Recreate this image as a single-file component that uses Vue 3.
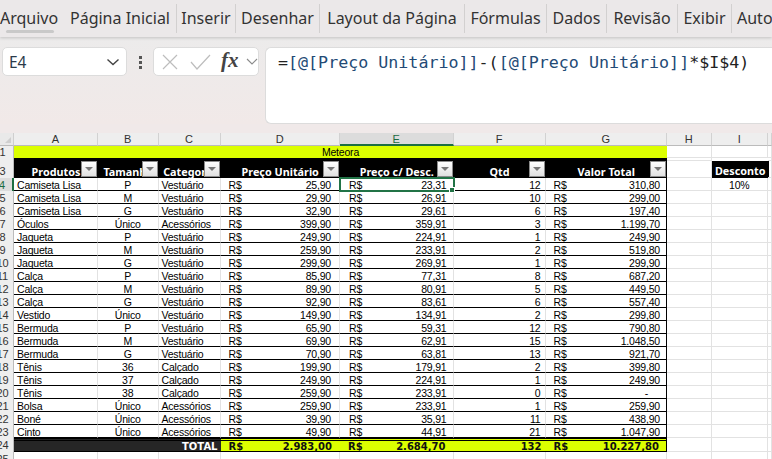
<script setup>
const cols = ['A','B','C','D','E','F','G','H','I','']
const rows = [
 ['Camiseta Lisa','P','Vestuário','25,90','23,31','12','310,80'],
 ['Camiseta Lisa','M','Vestuário','29,90','26,91','10','299,00'],
 ['Camiseta Lisa','G','Vestuário','32,90','29,61','6','197,40'],
 ['Óculos','Único','Acessórios','399,90','359,91','3','1.199,70'],
 ['Jaqueta','P','Vestuário','249,90','224,91','1','249,90'],
 ['Jaqueta','M','Vestuário','259,90','233,91','2','519,80'],
 ['Jaqueta','G','Vestuário','299,90','269,91','1','299,90'],
 ['Calça','P','Vestuário','85,90','77,31','8','687,20'],
 ['Calça','M','Vestuário','89,90','80,91','5','449,50'],
 ['Calça','G','Vestuário','92,90','83,61','6','557,40'],
 ['Vestido','Único','Vestuário','149,90','134,91','2','299,80'],
 ['Bermuda','P','Vestuário','65,90','59,31','12','790,80'],
 ['Bermuda','M','Vestuário','69,90','62,91','15','1.048,50'],
 ['Bermuda','G','Vestuário','70,90','63,81','13','921,70'],
 ['Tênis','36','Calçado','199,90','179,91','2','399,80'],
 ['Tênis','37','Calçado','249,90','224,91','1','249,90'],
 ['Tênis','38','Calçado','259,90','233,91','0','-'],
 ['Bolsa','Único','Acessórios','259,90','233,91','1','259,90'],
 ['Boné','Único','Acessórios','39,90','35,91','11','438,90'],
 ['Cinto','Único','Acessórios','49,90','44,91','21','1.047,90'],
]
const menu = [
 ['Página Inicial',112],['Inserir',58],['Desenhar',83],['Layout da Página',144],
 ['Fórmulas',81],['Dados',59],['Revisão',70],['Exibir',53]
]
const heads = ['Produtos','Tamanho','Categoria','Preço Unitário','Preço c/ Desc.','Qtd','Valor Total']
</script>

<template>
  <div class="app">
    <nav class="menu">
      <span class="tab first">Arquivo</span>
      <template v-for="m in menu" :key="m[0]">
        <span class="tab" :style="{ width: m[1] + 'px' }">{{ m[0] }}</span>
        <i class="sep"></i>
      </template>
      <span class="tab last">Auto</span>
    </nav>
    <section class="fbar">
      <div class="name"><span>E4</span>
        <svg width="14" height="8" viewBox="0 0 14 8"><path d="M1.5 1.5 7 6.5l5.5-5" fill="none" stroke="#444" stroke-width="1.4"/></svg>
      </div>
      <div class="dots"><b></b><b></b><b></b></div>
      <div class="fx">
        <svg class="x" width="16" height="16" viewBox="0 0 16 16"><path d="M1 1l14 14M15 1 1 15" fill="none" stroke="#bdbdbd" stroke-width="1.2"/></svg>
        <svg class="v" width="21" height="16" viewBox="0 0 21 16"><path d="M1 8l6 7L20 1" fill="none" stroke="#bdbdbd" stroke-width="1.2"/></svg>
        <em>fx</em>
        <svg class="c" width="12" height="7" viewBox="0 0 12 7"><path d="M1 1l5 5 5-5" fill="none" stroke="#8a8a8a" stroke-width="1.1"/></svg>
      </div>
      <div class="formula">=<span class="ref">[@[Preço Unitário]]</span>-(<span class="ref">[@[Preço Unitário]]</span>*$I$4)</div>
    </section>
    <div class="strip"></div>
    <section class="sheet">
      <div class="corner"><i></i></div>
      <div v-for="(c,i) in cols" :key="i" class="ch" :class="{sel:c==='E'}">{{ c }}</div>

      <div class="rh r1"><span>1</span></div>
      <div class="title">Meteora</div>
      <div class="blank"></div><div class="blank"></div><div class="blank"></div>

      <div class="rh r3"><span>3</span></div>
      <div v-for="h in heads" :key="h" class="th"><span>{{ h }}</span><u></u></div>
      <div class="blank h3"></div>
      <div class="desc"><span>Desconto</span></div>
      <div class="blank h3"></div>

      <template v-for="(r,i) in rows" :key="i">
        <div class="rh" :class="{sel:i===0}"><span>{{ i+4 }}</span></div>
        <div class="td">{{ r[0] }}</div>
        <div class="td ctr">{{ r[1] }}</div>
        <div class="td">{{ r[2] }}</div>
        <div class="td cur d"><span>R$</span><span>{{ r[3] }}</span></div>
        <div class="td cur e" :class="{active:i===0}"><span>R$</span><span>{{ r[4] }}</span></div>
        <div class="td num">{{ r[5] }}</div>
        <div class="td cur g"><span>R$</span><span :class="{dash:r[6]==='-'}">{{ r[6] }}</span></div>
        <div class="blank"></div>
        <div class="blank ctr pct">{{ i===0 ? '10%' : '' }}</div>
        <div class="blank"></div>
      </template>

      <div class="rh"><span>24</span></div>
      <div class="tot dark wide">TOTAL</div>
      <div class="tot cur d"><span>R$</span><span>2.983,00</span></div>
      <div class="tot cur e2"><span>R$</span><span>2.684,70</span></div>
      <div class="tot num">132</div>
      <div class="tot cur g"><span>R$</span><span>10.227,80</span></div>
      <div class="blank"></div><div class="blank"></div><div class="blank"></div>

      <div class="rh"><span>25</span></div>
      <div v-for="(c,i) in cols" :key="'e'+i" class="blank"></div>
    </section>
  </div>
</template>

<style scoped>
.app { width: 772px; height: 459px; overflow: hidden; background: #f0e9e9; font-family: "Noto Sans", sans-serif; }
.menu { height: 37px; display: flex; align-items: center; background: #ebe8e9; box-shadow: 0 1px 3px rgba(0,0,0,.18); position: relative; white-space: nowrap; color: #333; font-size: 16px; overflow: hidden; }
.tab { line-height: 37px; text-align: center; flex: none; }
.tab.first { width: 64px; text-align: left; position: relative; }
.tab.first::after { content: ""; position: absolute; left: 6px; width: 48px; height: 3px; bottom: 4px; background: #c9c9c9; border-radius: 2px; }
.tab.last { padding-left: 5px; }
.sep { width: 1px; height: 29px; background: #d2d0d0; flex: none; }
.fbar { height: 87px; box-sizing: border-box; padding: 10px 0 0 2px; display: flex; align-items: flex-start; background: linear-gradient(#ecebeb, #f1e9e8); }
.name, .fx { height: 29px; background: #fff; border: 1px solid #dcdcdc; border-radius: 5px; display: flex; align-items: center; box-sizing: border-box; }
.name { width: 125px; padding: 0 6px; justify-content: space-between; font-size: 15.5px; color: #2b3a4a; }
.dots { width: 26px; margin-top: 9px; display: flex; flex-direction: column; align-items: center; gap: 2px; }
.dots b { width: 3px; height: 3px; background: #555; }
.fx { width: 106px; padding: 0 0 0 8px; }
.fx .v { margin-left: 12px; }
.fx em { font: italic bold 21px/1 "Liberation Serif", serif; color: #444; margin-left: 10px; width: 18px; margin-top: -3px; }
.fx .c { margin-left: 7px; }
.formula { width: 507px; margin-left: 6px; height: 77px; box-sizing: border-box; background: #fff; border: 1px solid #dcdcdc; border-radius: 6px 0 0 6px; border-right: 0; padding: 1px 0 0 12px; font: 16.67px/28px "DejaVu Sans Mono", monospace; color: #222; }
.ref { color: #234a75; }
.strip { height: 9px; }
.sheet { display: grid; grid-template-columns: 14px 84px 60.5px 62px 119.5px 113.5px 92px 121.5px 44.5px 56.5px 4px; grid-template-rows: 13px 12px 20px repeat(20, 13px) 14px 12px; background: #fff; font: 10.5px/13px "Liberation Sans", sans-serif; letter-spacing: -.2px; color: #000; }
.corner { background: #e9e9e9; border-right: 1px solid #cfcfcf; border-bottom: 1px solid #bbb; box-sizing: border-box; position: relative; }
.corner i { position: absolute; right: 2px; bottom: 2px; border: 3px solid transparent; border-right-color: #cfcfcf; border-bottom-color: #cfcfcf; }
.ch { background: #eee; border-right: 1px solid #d2d2d2; border-bottom: 1px solid #bbb; box-sizing: border-box; text-align: center; font-size: 11px; letter-spacing: 0; line-height: 12px; color: #333; min-width: 0; overflow: hidden; }
.ch.sel { background: #dcdcdc; color: #1d6b41; border-bottom: 2px solid #1d6f42; }
.rh { background: #eee; border-right: 1px solid #bbb; box-sizing: border-box; color: #333; font-size: 11px; letter-spacing: 0; line-height: 14px; overflow: hidden; display: flex; justify-content: center; padding-right: 8px; white-space: nowrap; }
.rh.sel { color: #1d6b41; background: #dcdcdc; border-right: 2px solid #1d6f42; }
.rh.r1 { line-height: 13px; }
.rh.r3 { line-height: 26px; }
.title { grid-column: span 7; background: #dcff00; text-align: center; line-height: 13px; }
.blank { border-right: 1px solid #e2e2e2; border-bottom: 1px solid #e2e2e2; box-sizing: border-box; min-width: 0; }
.h3 { box-shadow: inset 0 2px #fff, inset 0 3px #e2e2e2; }
.th { background: #000; color: #fff; font: 700 10.8px/27px "Noto Sans", sans-serif; letter-spacing: 0; text-align: center; overflow: hidden; white-space: nowrap; position: relative; min-width: 0; }
.th span { display: block; }
.th u { position: absolute; right: 1px; bottom: 1px; width: 16px; height: 16px; box-sizing: border-box; border: 1px solid #8b8b8b; background: linear-gradient(#fff, #e0e0e0); }
.th u::after { content: ""; position: absolute; left: 3px; top: 5px; border: 4px solid transparent; border-top: 4px solid #777; border-bottom: 0; }
.desc { background: #000; color: #fff; font: 700 10.8px/18px "Noto Sans", sans-serif; letter-spacing: 0; text-align: center; padding-top: 4px; box-sizing: border-box; margin-right: -1px; box-shadow: inset 0 3px #fff; }
.td { border-bottom: 1px solid #000; border-right: 1px solid #e2e2e2; box-sizing: border-box; padding: 1px 3px 0; white-space: nowrap; overflow: hidden; line-height: 13px; min-width: 0; }
.ctr { text-align: center; }
.num { text-align: right; }
.td.num { padding-right: 4px; }
.cur { display: flex; justify-content: space-between; }
.td.d { padding: 1px 8px 0; }
.td.e { padding: 1px 6px 0 9px; }
.td.g { padding: 1px 6px 0 8px; border-right: 1px solid #000; }
.dash { padding-right: 12px; }
.pct { line-height: 13px; padding-top: 1px; }
.active { outline: 2px solid #217346; outline-offset: -1px; position: relative; overflow: visible; z-index: 1; }
.active::after { content: ""; position: absolute; right: -2px; bottom: -3px; width: 6px; height: 6px; background: #217346; border: 1px solid #fff; box-sizing: border-box; }
.tot { background: #dcff00; font: 700 10px/11px "DejaVu Sans", sans-serif; letter-spacing: 0; border-top: 3px double #000; border-bottom: 1px solid #000; box-sizing: border-box; white-space: nowrap; color: #111; }
.tot.d { padding: 0 8px 0 8px; }
.tot.e2 { padding: 0 8px 0 8px; }
.tot.g { padding: 0 7px 0 8px; border-right: 1px solid #000; }
.tot.num { padding-right: 4px; }
.dark { background: #262626; color: #fff; text-align: right; padding-right: 3px; }
.wide { grid-column: span 3; }
</style>
